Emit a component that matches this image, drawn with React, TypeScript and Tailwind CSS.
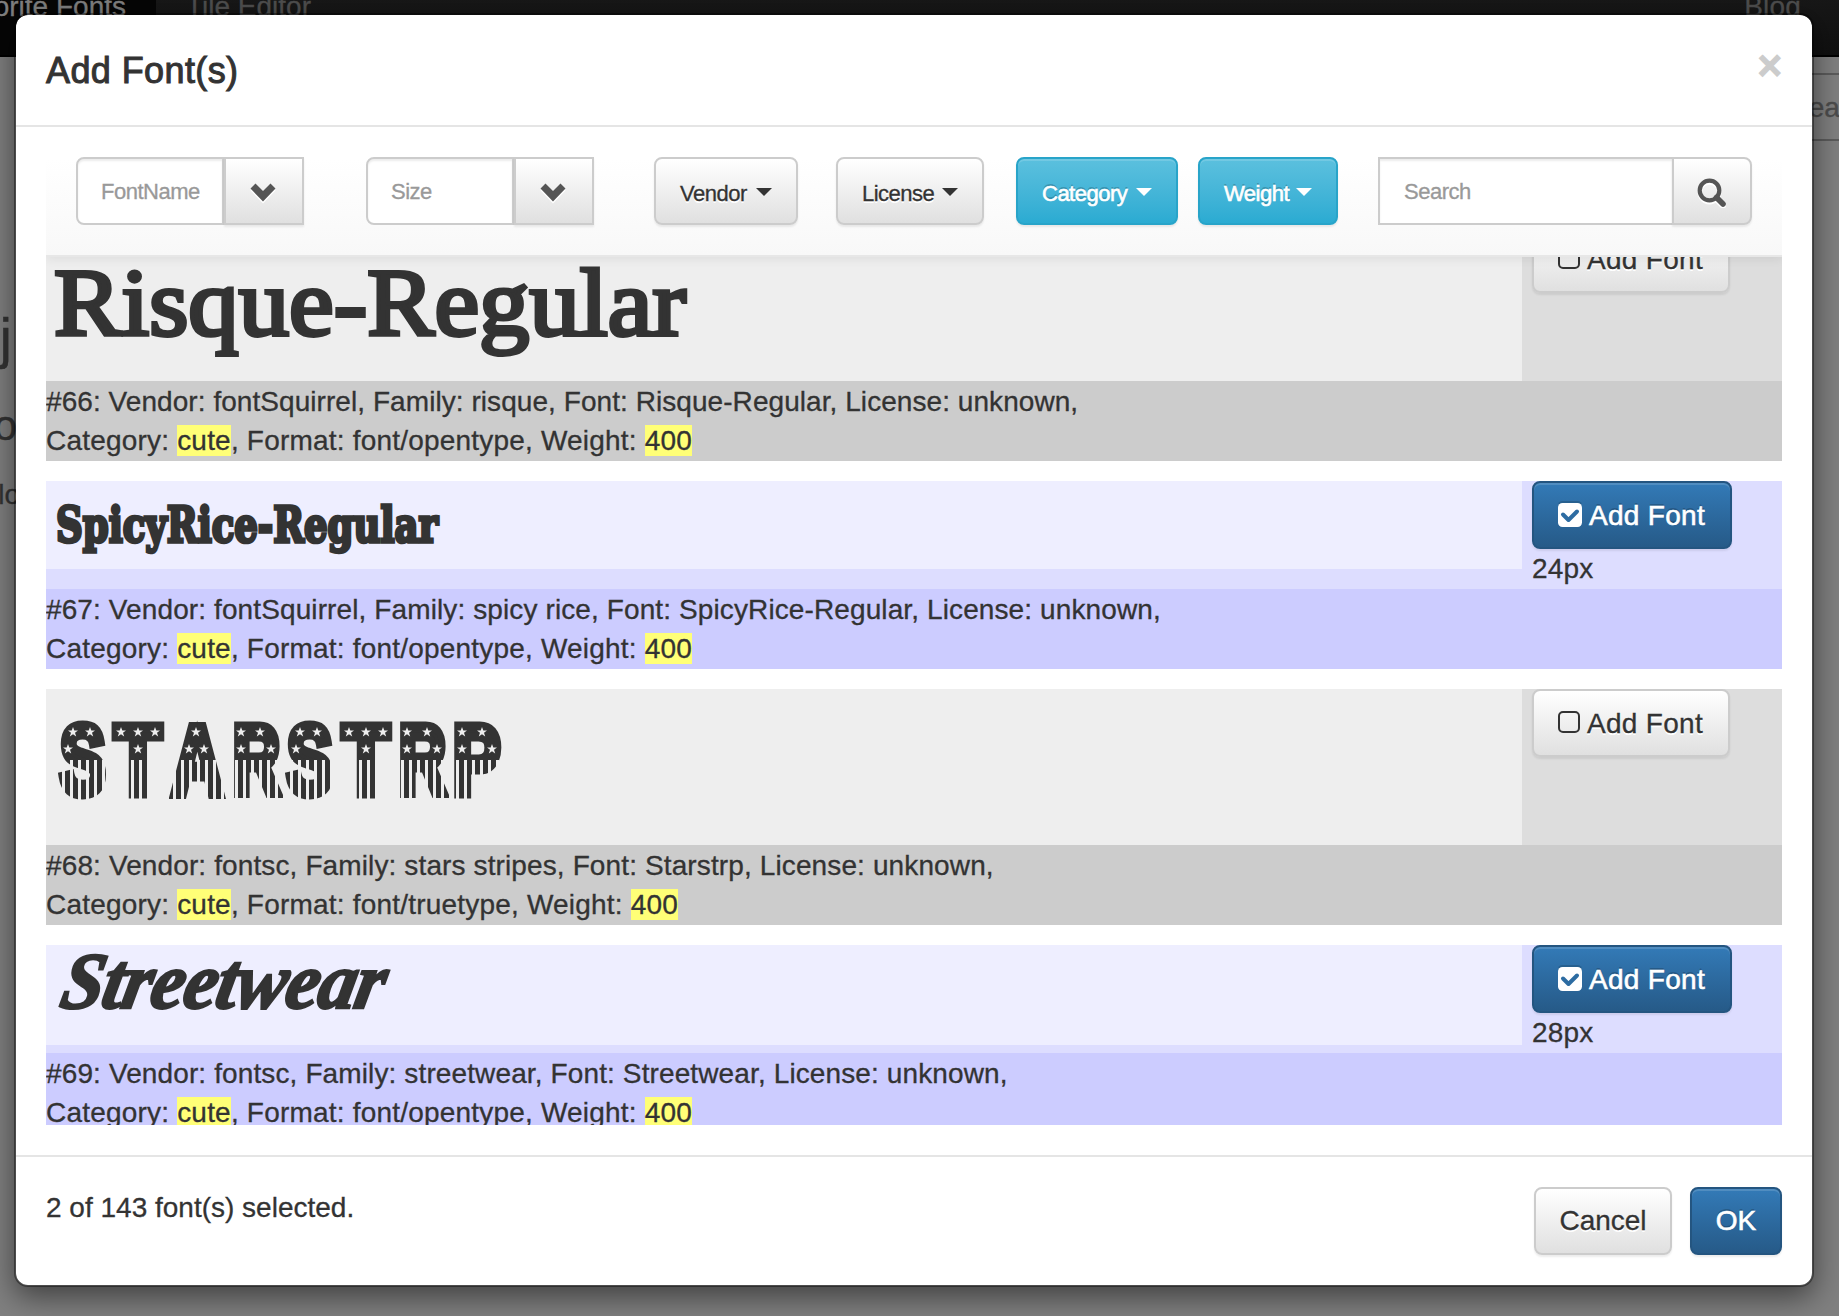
import type { ReactNode } from "react";

const GRAY_BTN =
  "border-[#ccc] bg-linear-to-b from-white to-[#e0e0e0] text-[#333] [text-shadow:0_2px_0_#fff] shadow-[inset_0_2px_0_rgba(255,255,255,0.15),0_2px_2px_rgba(0,0,0,0.075)]";
const BLUE_BTN =
  "border-[#245580] bg-linear-to-b from-[#337ab7] to-[#265a88] text-white [text-shadow:0_-2px_0_rgba(0,0,0,0.2)] [-webkit-text-stroke:0.6px] shadow-[inset_0_2px_0_rgba(255,255,255,0.15),0_2px_2px_rgba(0,0,0,0.075)]";
const INFO_BTN =
  "border-[#28a4c9] bg-linear-to-b from-[#5bc0de] to-[#2aabd2] text-white [text-shadow:0_-2px_0_rgba(0,0,0,0.2)] [-webkit-text-stroke:0.6px] shadow-[inset_0_2px_0_rgba(255,255,255,0.15),0_2px_2px_rgba(0,0,0,0.075)]";

function Caret() {
  return (
    <svg viewBox="0 0 16 8" className="mb-[3px] h-2 w-4 fill-current">
      <path d="M0 0h16L8 8z" />
    </svg>
  );
}

function Chevron() {
  return (
    <svg viewBox="0 0 26 20" className="mr-[3px] h-5 w-[26px] overflow-visible">
      <path d="M0.5 7.500L5.500 2.500 13 10 20.500 2.500 25.500 7.500 13 20.500z" fill="#fff" />
      <path d="M0.5 5.500L5.500 0.500 13 8 20.500 0.500 25.500 5.500 13 18.500z" fill="#555" />
    </svg>
  );
}

function SearchIcon() {
  return (
    <svg viewBox="0 0 30 30" className="size-[30px]" fill="none">
      <g stroke="#fff" transform="translate(0 2)">
        <circle cx="12.500" cy="12.500" r="9.800" strokeWidth="4.200" />
        <path d="M19.500 19.500L26 26" strokeWidth="5.600" strokeLinecap="round" />
      </g>
      <g stroke="#555">
        <circle cx="12.500" cy="12.500" r="9.800" strokeWidth="4.200" />
        <path d="M19.500 19.500L26 26" strokeWidth="5.600" strokeLinecap="round" />
      </g>
    </svg>
  );
}

function CheckBox({ checked }: { checked: boolean }) {
  return checked ? (
    <svg viewBox="0 0 24 26" className="-mt-0.5 h-[26px] w-6 shrink-0">
      <rect x="0" y="0" width="24" height="24" rx="4.500" fill="#27608f" />
      <rect x="0" y="2" width="24" height="24" rx="4.500" fill="#fff" />
      <path d="M5 13.500l5.500 5.500 8.500-8.500" fill="none" stroke="#2d6ca2" strokeWidth="4" strokeLinecap="round" strokeLinejoin="round" />
    </svg>
  ) : (
    <svg viewBox="0 0 22 22" className="-mt-0.5 size-[22px] shrink-0">
      <rect x="1" y="1" width="20" height="20" rx="4" fill="none" stroke="#333" strokeWidth="2" />
    </svg>
  );
}

function DropButton({ label, info, className }: { label: string; info?: boolean; className: string }) {
  return (
    <button
      className={`flex h-[68px] shrink-0 items-center justify-between rounded-lg border-2 pt-1 pr-6 pl-6 text-[22px] ${info ? INFO_BTN : GRAY_BTN} ${className}`}
    >
      <span className="tracking-[-0.5px] whitespace-nowrap">{label}</span>
      <Caret />
    </button>
  );
}

function Combo({ placeholder, className }: { placeholder: string; className: string }) {
  return (
    <div className={`flex h-[68px] w-[228px] shrink-0 ${className}`}>
      <div className="flex w-[148px] items-center rounded-l-lg border-2 border-[#ccc] bg-white pr-[22px] pl-[23px] shadow-[inset_0_2px_2px_rgba(0,0,0,0.075)]">
        <span className="w-full overflow-hidden text-[22px] tracking-[-0.5px] whitespace-nowrap text-[#999]">{placeholder}</span>
      </div>
      <div className={`flex w-20 items-center justify-center border-2 pt-1 ${GRAY_BTN}`}>
        <Chevron />
      </div>
    </div>
  );
}

function AddButton({ checked }: { checked: boolean }) {
  return (
    <button
      className={`flex h-[68px] items-center gap-[7px] rounded-lg border-2 pl-6 text-[28px] ${checked ? `w-[200px] ${BLUE_BTN}` : `w-[198px] ${GRAY_BTN}`}`}
    >
      <CheckBox checked={checked} />
      <span className="pt-px tracking-[0.3px] whitespace-nowrap">Add Font</span>
    </button>
  );
}

function Mark({ children }: { children: ReactNode }) {
  return <span className="bg-[#ffff77]">{children}</span>;
}

type RowProps = {
  id: number;
  vendor: string;
  family: string;
  font: string;
  format: string;
  size?: string;
  previewHeight: string;
  tracking: string;
  children: ReactNode;
};

function FontRow({ id, vendor, family, font, format, size, previewHeight, tracking, children }: RowProps) {
  const on = size !== undefined;
  return (
    <div className="mb-5">
      <div className={`flex items-start ${on ? "bg-[#ddddff]" : "bg-[#dddddd]"}`}>
        <div className={`w-[1476px] shrink-0 overflow-hidden ${previewHeight} ${on ? "bg-[#eeeeff]" : "bg-[#eeeeee]"}`}>
          {children}
        </div>
        <div className="pl-2.5">
          <AddButton checked={on} />
          {on && <div className="h-10 leading-10 tracking-[0.2px]">{size}</div>}
        </div>
      </div>
      <div className={`h-20 pt-px leading-10 whitespace-nowrap ${on ? "bg-[#ccccff]" : "bg-[#cccccc]"}`}>
        <div className={tracking}>
          #{id}: Vendor: {vendor}, Family: {family}, Font: {font}, License: unknown,
        </div>
        <div className="-mt-px tracking-[0.2px]">
          Category: <Mark>cute</Mark>, Format: {format}, Weight: <Mark>400</Mark>
        </div>
      </div>
    </div>
  );
}

const STARS: [number, number][] = [
  [15, 10], [32, 10], [10, 27],
  [63, 10], [80, 10], [97, 10], [80, 27],
  [138, 10], [131, 27], [146, 27],
  [183, 10], [202, 10], [183, 27], [213, 27],
  [242, 10], [259, 10], [238, 27],
  [291, 10], [308, 10], [325, 10], [308, 27],
  [349, 10], [369, 10], [349, 27], [379, 27],
  [404, 10], [424, 10], [404, 27], [434, 27],
];

const STAR_LETTERS: { ch: string; box: string; scale: string }[] = [
  { ch: "S", box: "w-[49px]", scale: "scale-x-[0.70]" },
  { ch: "T", box: "ml-1 w-[53px]", scale: "scale-x-[0.79]" },
  { ch: "A", box: "ml-[5px] w-[57px]", scale: "scale-x-[0.73]" },
  { ch: "R", box: "ml-[5px] w-[50px]", scale: "scale-x-[0.67]" },
  { ch: "S", box: "ml-[5px] w-[48px]", scale: "scale-x-[0.70]" },
  { ch: "T", box: "ml-[5px] w-[53px]", scale: "scale-x-[0.79]" },
  { ch: "R", box: "ml-[5px] w-[51px]", scale: "scale-x-[0.67]" },
  { ch: "P", box: "ml-1 w-[50px]", scale: "scale-x-[0.73]" },
];

function StarsAndStripes() {
  return (
    <div className="relative mt-[33px] ml-3 flex h-[79px] w-[450px]">
      {STAR_LETTERS.map(({ ch, box, scale }, i) => (
        <div key={i} className={`relative flex h-[79px] shrink-0 justify-center ${box}`}>
          <span className={`text-[98px] leading-[77px] font-bold [-webkit-text-stroke:9px_#333] ${scale}`}>{ch}</span>
          <div className="absolute -inset-x-px top-[38px] -bottom-1 bg-[repeating-linear-gradient(90deg,transparent_0_5px,#eee_5px_8px)]" />
        </div>
      ))}
      <svg viewBox="0 0 450 80" className="absolute top-0 left-0 h-20 w-[450px]" fill="#eee">
        {STARS.map(([x, y], i) => (
          <path
            key={i}
            transform={`translate(${x} ${y})`}
            d="M0-5L1.300-1.500 5-1.500 2 .8 3.200 4.500 0 2.200-3.200 4.500-2 .8-5-1.500-1.300-1.500z"
          />
        ))}
      </svg>
    </div>
  );
}

function Backdrop() {
  return (
    <div className="-mt-[45px]">
      <div className="flex h-[102px] border-b-2 border-black bg-linear-to-b from-[#1e1e1e] to-[#101010] leading-10">
        <div className="flex w-[156px] justify-end overflow-hidden bg-[#060606] pt-8 pr-[30px] whitespace-nowrap text-[#808080]">
          Favorite Fonts
        </div>
        <div className="pt-8 pl-[30px] text-[#4f4f4f]">Tile Editor</div>
        <div className="ml-auto pt-8 pr-[38px] tracking-[0.2px] text-[#4f4f4f]">Blog</div>
      </div>
      <div className="flex justify-between pt-4">
        <div className="w-[18px] text-[#333]">
          <div className="mt-[225px] flex h-[80px] w-3 justify-end text-[56px] leading-[80px]">j</div>
          <div className="mt-[18px] flex h-[60px] w-[17px] justify-end text-[42px] leading-[60px]">o</div>
          <div className="mt-[19px] flex h-10 w-[20px] justify-end leading-10">lo</div>
        </div>
        <div className="flex h-[68px] w-[73px] items-center overflow-hidden border-y-2 border-[#5c5c5c] pt-0.5 pl-6 text-[#4d4d4d]">
          <span>Search</span>
        </div>
      </div>
    </div>
  );
}

export default function App() {
  return (
    <div className="relative h-[1316px] w-[1839px] overflow-hidden bg-[#808080] font-['Liberation_Sans',Arial,sans-serif] text-[28px] text-[#333] [-webkit-text-stroke:0.3px]">
      <Backdrop />
      <div className="absolute top-[13px] left-[14px] flex h-[1274px] w-[1800px] flex-col rounded-[14px] border-2 border-black/40 bg-white bg-clip-padding shadow-[0_10px_30px_rgba(0,0,0,0.5)]">
        <div className="flex h-28 shrink-0 items-start justify-between border-b-2 border-[#e5e5e5] px-[30px]">
          <h4 className="pt-9 text-[36px] leading-10 tracking-[0.4px] [-webkit-text-stroke:1px]">Add Font(s)</h4>
          <button className="pt-[30px] text-[42px] leading-[42px] font-bold text-[#ccc] [-webkit-text-stroke:1px]">×</button>
        </div>

        <div className="flex h-[1028px] shrink-0 flex-col px-[30px]">
          <div className="relative z-10 flex h-[130px] shrink-0 items-start border-b-2 border-[#e7e7e7] bg-linear-to-b from-white from-25% to-[#f8f8f8] pt-[30px] pl-[30px] shadow-[0_2px_10px_rgba(0,0,0,0.075)] [clip-path:inset(0_0_-14px_0)]">
            <Combo placeholder="FontName" className="" />
            <Combo placeholder="Size" className="ml-[62px]" />
            <DropButton label="Vendor" className="ml-[60px] w-[144px]" />
            <DropButton label="License" className="ml-[38px] w-[148px]" />
            <DropButton label="Category" info className="ml-8 w-[162px]" />
            <DropButton label="Weight" info className="ml-5 w-[140px]" />
            <div className="ml-10 flex h-[68px] w-[374px]">
              <div className="flex w-[294px] items-center border-2 border-r-0 border-[#ccc] bg-white pl-6 text-[22px] tracking-[-0.5px] text-[#999] shadow-[inset_0_2px_2px_rgba(0,0,0,0.075)]">
                Search
              </div>
              <div className={`flex w-20 items-center justify-center rounded-r-lg border-2 pt-1 ${GRAY_BTN}`}>
                <SearchIcon />
              </div>
            </div>
          </div>

          <div className="h-[868px] shrink-0 overflow-hidden">
            <div className="-mt-8">
              <FontRow
                id={66}
                vendor="fontSquirrel"
                family="risque"
                font="Risque-Regular"
                format="font/opentype"
                previewHeight="h-[156px]"
                tracking="tracking-[0.06px]"
              >
                <div className="ml-2 w-max origin-left scale-x-[1.06] pt-7 font-['Liberation_Serif'] text-[95px] leading-[100px] whitespace-nowrap [-webkit-text-stroke:4px_#333]">
                  Risque-Regular
                </div>
              </FontRow>
              <FontRow
                id={67}
                vendor="fontSquirrel"
                family="spicy rice"
                font="SpicyRice-Regular"
                format="font/opentype"
                size="24px"
                previewHeight="h-[88px]"
                tracking="tracking-[0.11px]"
              >
                <div className="ml-2.5 w-max origin-left scale-x-[0.772] pt-3 font-['DejaVu_Serif'] text-[48px] leading-[64px] font-bold whitespace-nowrap [-webkit-text-stroke:3.5px_#333]">
                  SpicyRice-Regular
                </div>
              </FontRow>
              <FontRow
                id={68}
                vendor="fontsc"
                family="stars stripes"
                font="Starstrp"
                format="font/truetype"
                previewHeight="h-[156px]"
                tracking="tracking-[0.12px]"
              >
                <StarsAndStripes />
              </FontRow>
              <FontRow
                id={69}
                vendor="fontsc"
                family="streetwear"
                font="Streetwear"
                format="font/opentype"
                size="28px"
                previewHeight="h-[100px]"
                tracking="tracking-[0.12px]"
              >
                <div className="ml-2 w-max origin-bottom-left -skew-x-12 scale-x-[0.945] pl-0.5 font-['Liberation_Serif'] text-[80px] leading-[73px] font-bold tracking-[-1px] whitespace-nowrap italic [-webkit-text-stroke:2.5px_#333]">
                  Streetwear
                </div>
              </FontRow>
            </div>
          </div>
        </div>

        <div className="flex grow items-start border-t-2 border-[#e5e5e5] px-[30px] pt-[30px]">
          <div className="pt-px leading-10">2 of 143 font(s) selected.</div>
          <button className={`ml-auto h-[68px] w-[138px] rounded-lg border-2 ${GRAY_BTN}`}>Cancel</button>
          <button className={`ml-[18px] h-[68px] w-[92px] rounded-lg border-2 ${BLUE_BTN}`}>OK</button>
        </div>
      </div>
    </div>
  );
}
